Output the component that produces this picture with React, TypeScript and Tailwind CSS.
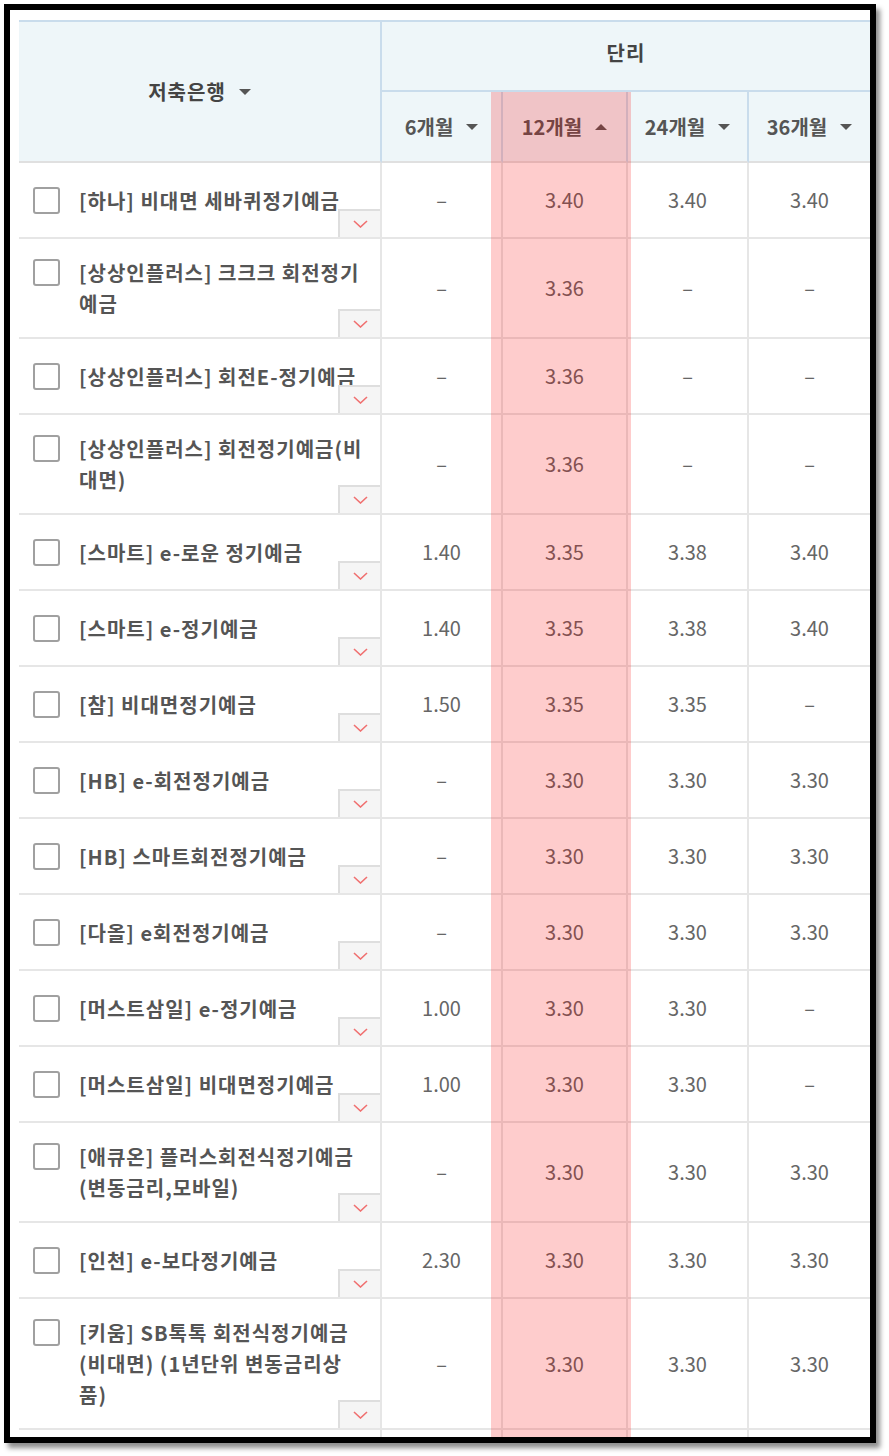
import React from "react";

type Row = { lines: string[]; v: string[] };

const D = "–";

const rows: Row[] = [
  { lines: ["[하나] 비대면 세바퀴정기예금"], v: [D, "3.40", "3.40", "3.40"] },
  { lines: ["[상상인플러스] 크크크 회전정기", "예금"], v: [D, "3.36", D, D] },
  { lines: ["[상상인플러스] 회전E-정기예금"], v: [D, "3.36", D, D] },
  { lines: ["[상상인플러스] 회전정기예금(비", "대면)"], v: [D, "3.36", D, D] },
  { lines: ["[스마트] e-로운 정기예금"], v: ["1.40", "3.35", "3.38", "3.40"] },
  { lines: ["[스마트] e-정기예금"], v: ["1.40", "3.35", "3.38", "3.40"] },
  { lines: ["[참] 비대면정기예금"], v: ["1.50", "3.35", "3.35", D] },
  { lines: ["[HB] e-회전정기예금"], v: [D, "3.30", "3.30", "3.30"] },
  { lines: ["[HB] 스마트회전정기예금"], v: [D, "3.30", "3.30", "3.30"] },
  { lines: ["[다올] e회전정기예금"], v: [D, "3.30", "3.30", "3.30"] },
  { lines: ["[머스트삼일] e-정기예금"], v: ["1.00", "3.30", "3.30", D] },
  { lines: ["[머스트삼일] 비대면정기예금"], v: ["1.00", "3.30", "3.30", D] },
  { lines: ["[애큐온] 플러스회전식정기예금", "(변동금리,모바일)"], v: [D, "3.30", "3.30", "3.30"] },
  { lines: ["[인천] e-보다정기예금"], v: ["2.30", "3.30", "3.30", "3.30"] },
  {
    lines: ["[키움] SB톡톡 회전식정기예금", "(비대면) (1년단위 변동금리상", "품)"],
    v: [D, "3.30", "3.30", "3.30"],
  },
];

const font = { fontFamily: '"Noto Sans CJK KR", "Noto Sans", sans-serif' };

function Tri({ up = false }: { up?: boolean }) {
  return (
    <svg width="12" height="6" viewBox="0 0 12 6" className="shrink-0">
      {up ? <polygon points="0,6 12,6 6,0" fill="#555" /> : <polygon points="0,0 12,0 6,6" fill="#555" />}
    </svg>
  );
}

function Chevron() {
  return (
    <svg width="15" height="8" viewBox="0 0 15 8">
      <polyline points="1,1 7.5,7 14,1" fill="none" stroke="#f07070" strokeWidth="1.6" />
    </svg>
  );
}

export default function App() {
  return (
    <div className="w-[889px] h-[1456px] bg-white p-[4px]" style={font}>
      <div className="relative w-[872px] h-[1439px] border-[6px] border-black bg-white overflow-hidden shadow-[4px_5px_5px_rgba(0,0,0,0.45)]">
        <div className="pl-[9px] pt-[10px]">
          <div className="grid grid-cols-[363px_121px_125px_121px_121px]">
            {/* header */}
            <div className="row-span-2 h-[143px] bg-[#eef6f9] border-t-2 border-t-[#c9dcec] border-r-2 border-r-[#c9dcec] border-b-2 border-b-[#e0e0e0] flex items-center justify-center gap-[13px]">
              <span className="text-[20px] font-bold text-[#444] leading-none tracking-[1px]">저축은행</span>
              <Tri />
            </div>
            <div className="col-span-4 h-[72px] bg-[#eef6f9] border-t-2 border-t-[#c9dcec] border-b-2 border-b-[#c9dcec] flex items-center justify-center pb-[6px]">
              <span className="text-[20px] font-bold text-[#444] leading-none tracking-[1px]">단리</span>
            </div>
            {[
              { t: "6개월", up: false },
              { t: "12개월", up: true },
              { t: "24개월", up: false },
              { t: "36개월", up: false },
            ].map((h, i) => (
              <div
                key={h.t}
                className={`h-[71px] bg-[#eef6f9] border-b-2 border-b-[#e0e0e0] flex items-center justify-center gap-[13px] ${
                  i < 3 ? "border-r-2 border-r-[#c9dcec]" : ""
                }`}
              >
                <span className="text-[20px] font-bold text-[#555] leading-none">{h.t}</span>
                <Tri up={h.up} />
              </div>
            ))}

            {/* body */}
            {rows.map((r, ri) => (
              <React.Fragment key={ri}>
                <div className="relative min-h-[76px] border-b-2 border-r-2 border-[#e6e6e6] flex items-center pl-[14px] py-[18px]">
                  <div className="flex items-start gap-[19px]">
                    <div className="mt-[2px] w-[27px] h-[27px] shrink-0 rounded-[3px] border-2 border-[#a0a0a0] bg-white" />
                    <div className="text-[20px] leading-[31px] font-bold text-[#555] tracking-[1px]">
                      {r.lines.map((l, li) => (
                        <div key={li} className="whitespace-nowrap">
                          {l}
                        </div>
                      ))}
                    </div>
                  </div>
                  <div className="absolute right-0 bottom-0 w-[42px] h-[28px] bg-[#f5f5f5] border-t-2 border-l-2 border-[#dedede] flex items-center justify-center">
                    <Chevron />
                  </div>
                </div>
                {r.v.map((v, vi) => (
                  <div
                    key={vi}
                    className={`flex items-center justify-center border-b-2 border-[#e6e6e6] text-[20px] text-[#666] ${
                      vi < 3 ? "border-r-2" : ""
                    }`}
                  >
                    {v}
                  </div>
                ))}
              </React.Fragment>
            ))}
            {/* next row, clipped by the frame */}
            <div className="h-[76px] border-r-2 border-[#e6e6e6]" />
            <div className="h-[76px] border-r-2 border-[#e6e6e6]" />
            <div className="h-[76px] border-r-2 border-[#e6e6e6]" />
            <div className="h-[76px] border-r-2 border-[#e6e6e6]" />
            <div className="h-[76px]" />
          </div>
        </div>
        {/* highlight annotation */}
        <div className="absolute left-[481px] top-[82px] w-[140px] bottom-0 bg-[rgba(250,0,0,0.2)] pointer-events-none" />
      </div>
    </div>
  );
}
